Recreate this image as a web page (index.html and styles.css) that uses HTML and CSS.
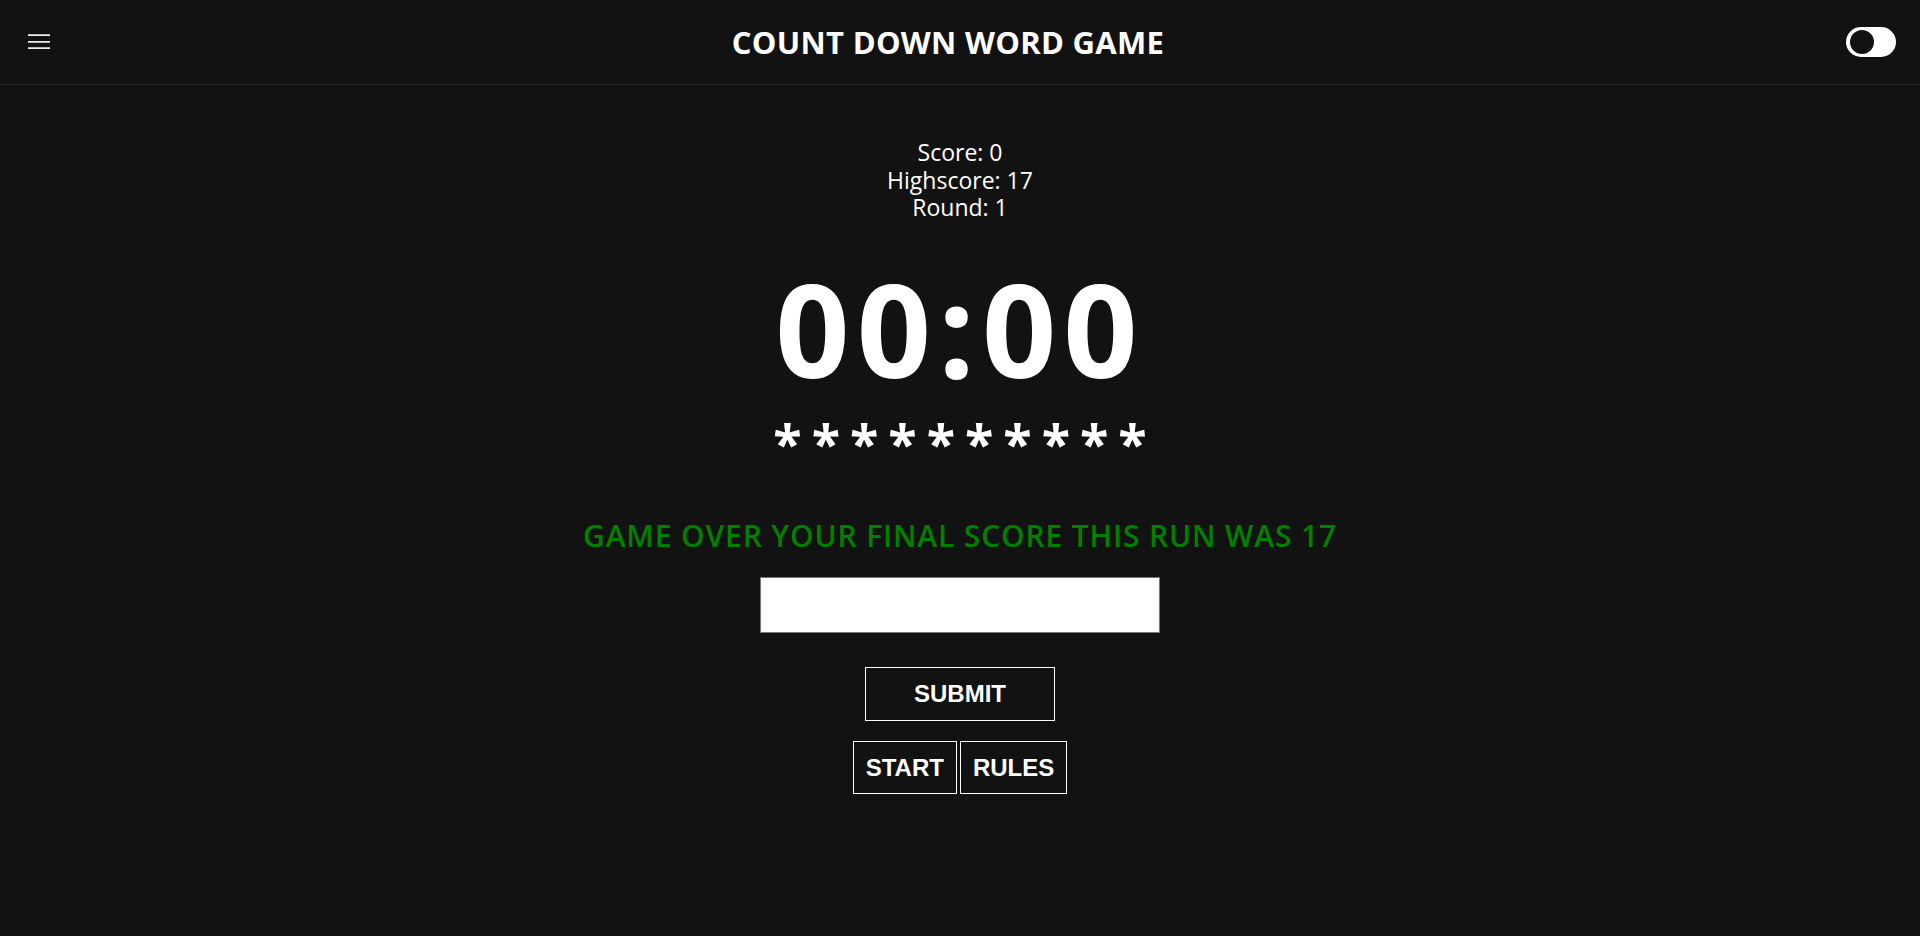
FILE: index.html
```html
<!DOCTYPE html>
<html lang="en">
<head>
<meta charset="utf-8">
<title>Count Down Word Game</title>
<link rel="stylesheet" href="styles.css">
</head>
<body>
<header class="topbar">
  <button class="menu-btn" aria-label="Menu">
    <svg width="22" height="16" viewBox="0 0 22 16"><path d="M0 1.2H22M0 7.8H22M0 14.2H22" stroke="#eeeeee" stroke-width="1.8" fill="none"/></svg>
  </button>
  <h1 class="title">COUNT DOWN WORD GAME</h1>
  <div class="toggle"><span class="knob"></span></div>
</header>
<main class="game">
  <div class="stats">
    <div>Score: 0</div>
    <div>Highscore: 17</div>
    <div>Round: 1</div>
  </div>
  <div class="timer">00:00</div>
  <div class="letters">**********</div>
  <p class="message">GAME OVER YOUR FINAL SCORE THIS RUN WAS 17</p>
  <input class="answer" type="text" aria-label="Answer">
  <button class="btn btn-submit">SUBMIT</button>
  <div class="controls">
    <button class="btn">START</button>
    <button class="btn">RULES</button>
  </div>
</main>
</body>
</html>
```
FILE: styles.css
```css
html, body {
  margin: 0;
  padding: 0;
  background: #121212;
  color: #ffffff;
  font-family: "Open Sans", "Noto Sans", sans-serif;
}

.topbar {
  height: 84px;
  border-bottom: 1px solid #2a2a2a;
  display: flex;
  align-items: center;
  justify-content: space-between;
  padding: 0 24px 0 28px;
}

.menu-btn {
  background: none;
  border: 0;
  padding: 0;
  width: 22px;
  height: 16px;
  display: block;
}
.menu-btn svg { display: block; }

.title {
  margin: 0;
  font-size: 31px;
  font-weight: 700;
  letter-spacing: 0.3px;
  line-height: 40px;
}

.toggle {
  width: 50px;
  height: 30px;
  border-radius: 15px;
  background: #ffffff;
  display: flex;
  align-items: center;
  padding-left: 4px;
  box-sizing: border-box;
}
.knob {
  width: 24px;
  height: 24px;
  border-radius: 50%;
  background: #121212;
}

.game {
  display: flex;
  flex-direction: column;
  align-items: center;
}

.stats {
  margin-top: 54px;
  font-size: 23px;
  line-height: 27.5px;
  text-align: center;
}

.timer {
  margin-top: 41px;
  font-size: 130px;
  font-weight: 700;
  line-height: 130px;
  letter-spacing: 7px;
}

.letters {
  margin-top: 30px;
  height: 40px;
  font-size: 52px;
  font-weight: 700;
  line-height: 40px;
  letter-spacing: 10px;
  padding-left: 10px;
  white-space: nowrap;
}

.message {
  margin: 53px 0 0;
  color: #008000;
  font-size: 30px;
  font-weight: 600;
  line-height: 40px;
  letter-spacing: 0.85px;
}

.answer {
  margin-top: 21px;
  width: 400px;
  height: 56px;
  box-sizing: border-box;
  border: 1px solid #767676;
  background: #ffffff;
  padding: 0 8px;
  font-size: 20px;
}

.btn {
  background: transparent;
  color: #ffffff;
  border: 1px solid #ffffff;
  font-family: "Liberation Sans", Arial, sans-serif;
  font-weight: 700;
  font-size: 24px;
  line-height: 28px;
  padding: 12px 12px;
  height: 54px;
  box-sizing: border-box;
  cursor: pointer;
}

.btn-submit {
  margin-top: 34px;
  width: 190px;
}

.controls {
  margin-top: 20px;
  display: flex;
  gap: 3px;
}
.controls .btn {
  height: 53px;
}
```
